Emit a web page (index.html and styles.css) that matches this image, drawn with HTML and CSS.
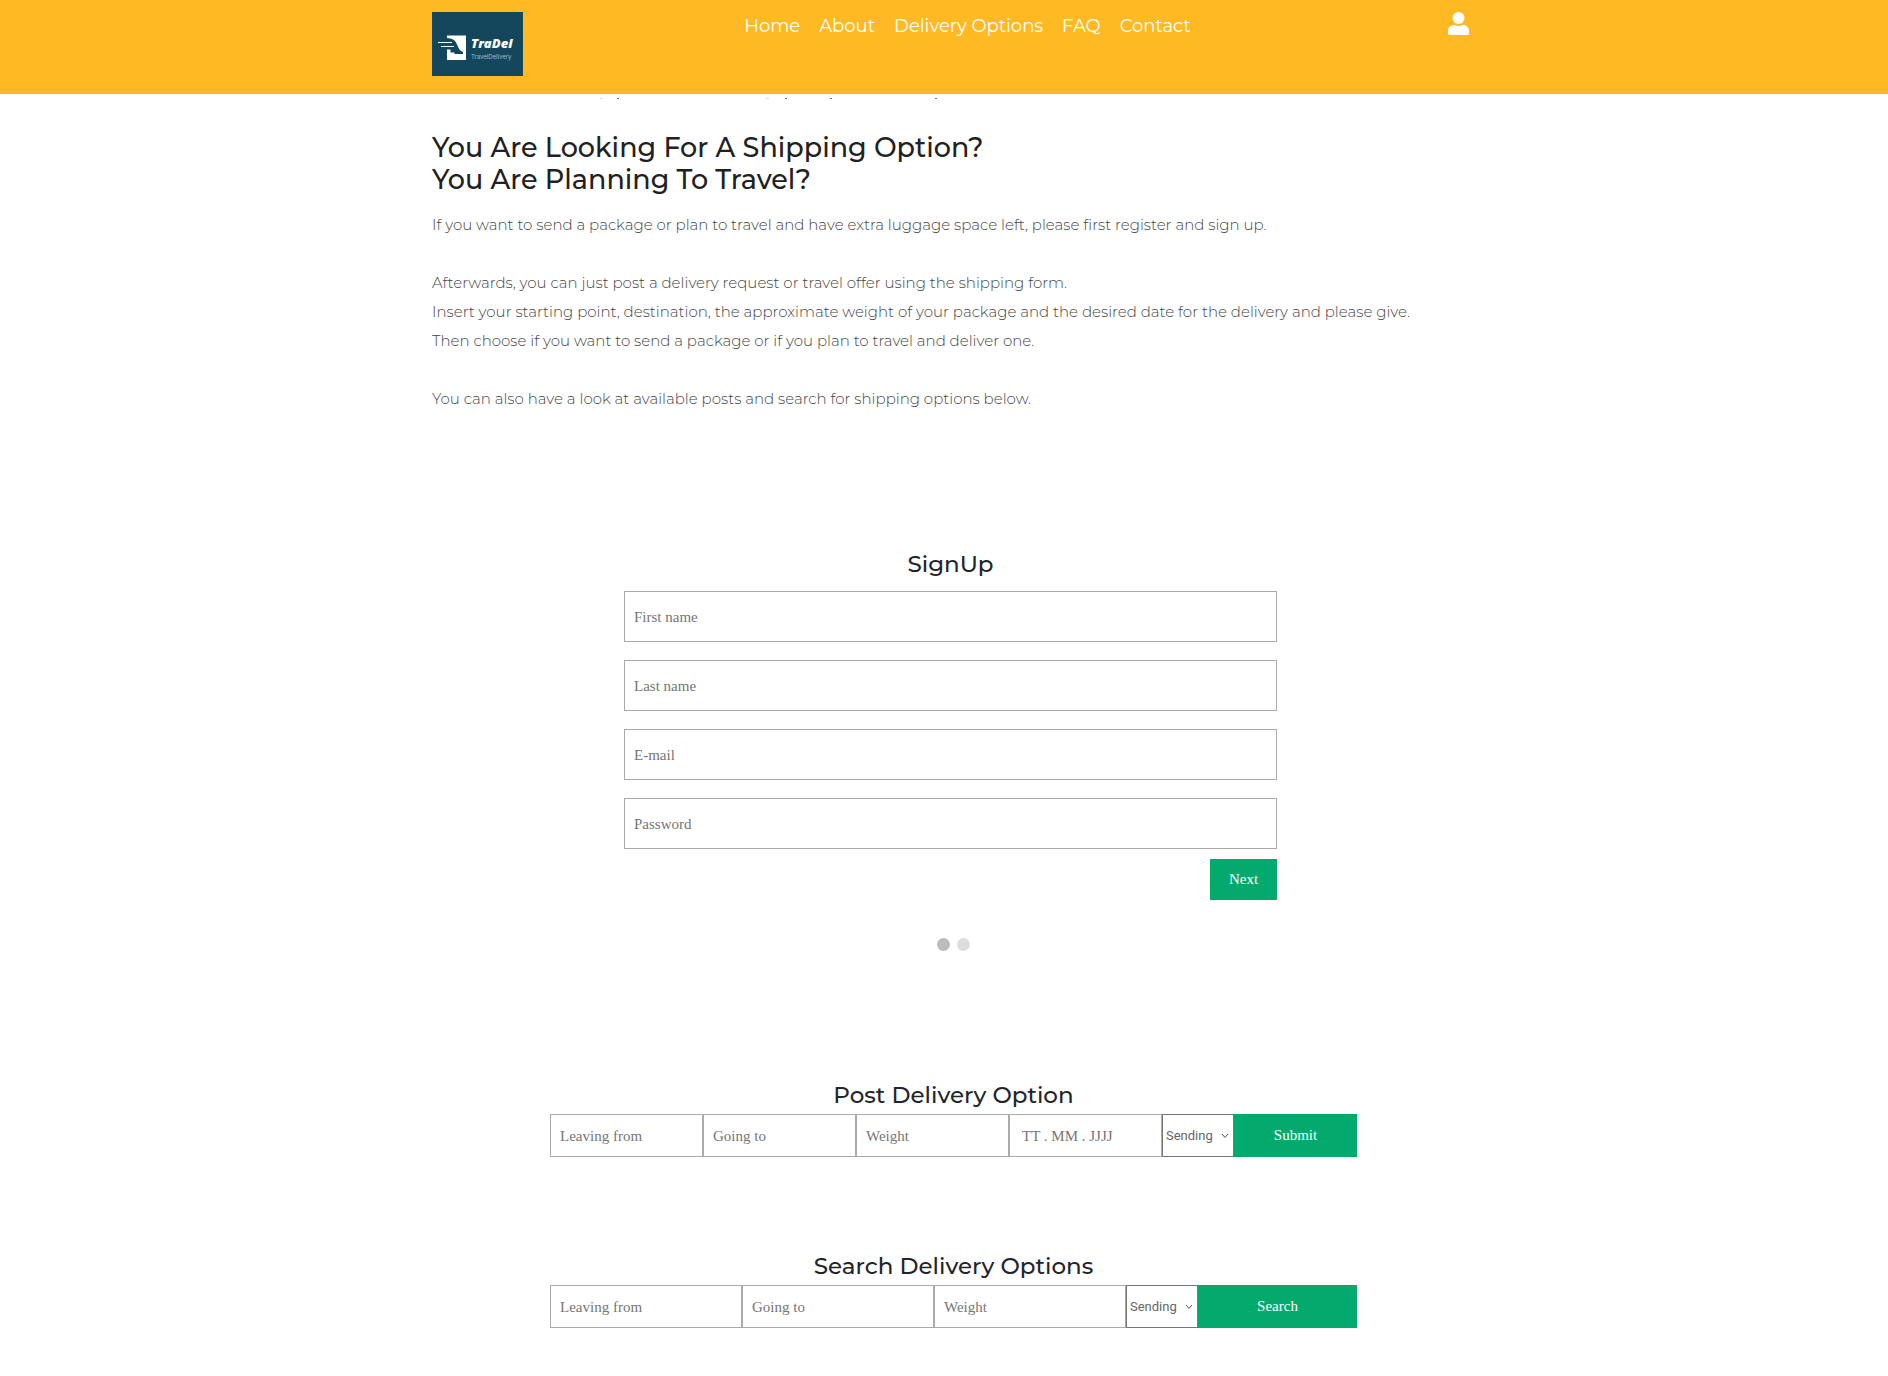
FILE: index.html
```html
<!DOCTYPE html>
<html lang="en">
<head>
<meta charset="utf-8">
<title>TraDel - Travel Delivery</title>
<meta name="viewport" content="width=device-width, initial-scale=1">
<link rel="stylesheet" href="styles.css">
</head>
<body>
<header class="site-header">
  <div class="container header-row">
    <a class="logo" href="#" aria-label="TraDel home">
      <svg width="91" height="64" viewBox="0 0 91 64">
        <rect width="91" height="64" fill="#14475c"/>
        <path d="M15 23.500H34V48H15V37.500H18.500V40.500H22.500V42H31V40C27.500 39 26.500 35.500 24.500 31.500C23 28 20.500 26.500 15 26Z" fill="#fff"/>
        <path d="M6 30.500H20M9 34.500H22" stroke="#fff" stroke-width="1"/>
        <path d="M15 27.500C20 27.500 22 29 23.500 32C25 36 26.500 39.500 30.500 40.500" stroke="#14475c" stroke-width="1" fill="none"/>
        <text x="39" y="36" class="logo-name">TraDel</text>
        <text x="39" y="47" class="logo-tag">TravelDelivery</text>
      </svg>
    </a>
    <nav class="nav">
      <a href="#">Home</a>
      <a href="#">About</a>
      <a href="#">Delivery Options</a>
      <a href="#">FAQ</a>
      <a href="#">Contact</a>
    </nav>
    <a class="account" href="#" aria-label="Account">
      <svg width="21" height="24" viewBox="0 0 21 24" fill="#fff">
        <circle cx="10.500" cy="6" r="6"/>
        <path d="M6 13C7.500 13 8.500 14 10.500 14S13.500 13 15 13C18.500 13 21 15.500 21 19V21.500Q21 23 19.500 23H1.500Q0 23 0 21.500V19C0 15.500 2.500 13 6 13Z"/>
      </svg>
    </a>
  </div>
</header>

<main class="container">
  <!-- Tail of the previous section, mostly under the header -->
  <svg class="previous-tail" width="520" height="1" viewBox="0 0 520 1" aria-hidden="true">
    <path d="M168 0h3v1h-3zM334 0h3v1h-3z" fill="#ddd"/>
    <path d="M185 0h2v1h-2zM353 0h2v1h-2zM398 0h2v1h-2zM503 0h2v1h-2z" fill="#777"/>
  </svg>

  <section class="intro">
    <h1>You Are Looking For A Shipping Option?<br>You Are Planning To Travel?</h1>
    <p>If you want to send a package or plan to travel and have extra luggage space left, please first register and sign up.<br><br>
    Afterwards, you can just post a delivery request or travel offer using the shipping form.<br>
    Insert your starting point, destination, the approximate weight of your package and the desired date for the delivery and please give.<br>
    Then choose if you want to send a package or if you plan to travel and deliver one.<br><br>
    You can also have a look at available posts and search for shipping options below.</p>
  </section>

  <form class="signup">
    <h2>SignUp</h2>
    <div class="fields">
      <input type="text" placeholder="First name" aria-label="First name">
      <input type="text" placeholder="Last name" aria-label="Last name">
      <input type="email" placeholder="E-mail" aria-label="E-mail">
      <input type="password" placeholder="Password" aria-label="Password">
    </div>
    <button class="next" type="button">Next</button>
  </form>

  <div class="steps"><span class="step active"></span><span class="step"></span></div>

  <section class="delivery">
    <h2>Post Delivery Option</h2>
    <form class="delivery-row">
      <input type="text" placeholder="Leaving from" aria-label="Leaving from">
      <input type="text" placeholder="Going to" aria-label="Going to">
      <input type="text" placeholder="Weight" aria-label="Weight">
      <input class="date" type="text" placeholder="TT . MM . JJJJ" aria-label="Date">
      <div class="picker">
        <select aria-label="Type"><option>Sending</option><option>Traveling</option></select>
        <svg width="8" height="6" viewBox="0 0 8 6" aria-hidden="true"><path d="M1 1L4 4.500L7 1"/></svg>
      </div>
      <button class="submit" type="button">Submit</button>
    </form>
  </section>

  <section class="delivery">
    <h2>Search Delivery Options</h2>
    <form class="delivery-row">
      <input type="text" placeholder="Leaving from" aria-label="Leaving from">
      <input type="text" placeholder="Going to" aria-label="Going to">
      <input type="text" placeholder="Weight" aria-label="Weight">
      <div class="picker">
        <select aria-label="Type"><option>Sending</option><option>Traveling</option></select>
        <svg width="8" height="6" viewBox="0 0 8 6" aria-hidden="true"><path d="M1 1L4 4.500L7 1"/></svg>
      </div>
      <button class="search" type="button">Search</button>
    </form>
  </section>
</main>
</body>
</html>
```
FILE: styles.css
```css
* {
  box-sizing: border-box;
}

body {
  margin: 0;
  background: #fff;
  color: #212529;
  font-family: Montserrat, Inter, sans-serif;
}

.container {
  max-width: 1050px;
  margin: 0 auto;
  padding-left: 13px;
}

.site-header {
  background: #ffb923;
}

.header-row {
  display: grid;
  grid-template-columns: 1fr auto 1fr;
  align-items: start;
  padding-top: 12px;
  padding-bottom: 18px;
}

.logo svg,
.account svg {
  display: block;
}

.logo {
  justify-self: start;
}

.logo-name {
  fill: #fff;
  font: italic 800 13px "Open Sans", sans-serif;
}

.logo-tag {
  fill: #a9bcc4;
  font: 6px Inter, sans-serif;
}

.nav {
  display: flex;
  gap: 19px;
  padding-left: 34px;
  line-height: 28px;
}

.nav a {
  color: #fff;
  font-size: 18px;
  text-decoration: none;
}

.account {
  justify-self: end;
}

.previous-tail {
  display: block;
  margin-top: 4px;
}

h1,
h2 {
  margin: 0;
  font-weight: 500;
}

.intro {
  padding-top: 33px;
}

.intro h1 {
  color: #212121;
  font-size: 27px;
  line-height: 32px;
}

.intro p {
  margin: 14px 0 0;
  color: #444;
  font-size: 15px;
  font-weight: 300;
  line-height: 29px;
}

h2 {
  font-size: 23px;
  line-height: 28px;
  text-align: center;
}

input,
.next,
.submit,
.search {
  font-family: "Liberation Serif", serif;
  font-size: 15px;
}

input {
  min-width: 0;
  padding: 1px 9px 0;
  border: 1px solid #aaa;
  border-radius: 0;
  background: #fff;
}

input::placeholder {
  color: #757575;
}

button {
  border: 0;
  background: #04aa6d;
  color: #fff;
}

.signup {
  max-width: 653px;
  margin: 137px auto 0;
}

.fields {
  display: grid;
  gap: 18px;
  margin-top: 13px;
}

.fields input {
  height: 51px;
}

.next {
  display: block;
  width: 67px;
  height: 41px;
  margin: 10px 0 0 auto;
}

.steps {
  display: flex;
  justify-content: center;
  gap: 7px;
  padding: 38px 0 0 6px;
}

.step {
  width: 13px;
  height: 13px;
  border-radius: 50%;
  background: #ddd;
}

.step.active {
  background: #bbb;
}

.delivery {
  max-width: 813px;
  margin: 0 auto;
  padding: 130px 0 0 6px;
}

.delivery + .delivery {
  padding-top: 95px;
}

.delivery-row {
  display: flex;
  margin-top: 5px;
}

.delivery-row input {
  flex: 1;
  height: 43px;
}

.delivery-row .date {
  text-indent: 3px;
}

.picker {
  position: relative;
  display: flex;
  width: 72px;
}

.picker svg {
  position: absolute;
  top: 19px;
  right: 5px;
  fill: none;
  stroke: #555;
  stroke-width: 1;
  pointer-events: none;
}

select {
  flex: 1;
  min-width: 0;
  padding: 0 3px;
  border: 1px solid #767676;
  border-radius: 0;
  appearance: none;
  background: #fff;
  color: #666;
  font: 13px Roboto, sans-serif;
}

.submit {
  width: 123px;
}

.search {
  width: 159px;
}
```
